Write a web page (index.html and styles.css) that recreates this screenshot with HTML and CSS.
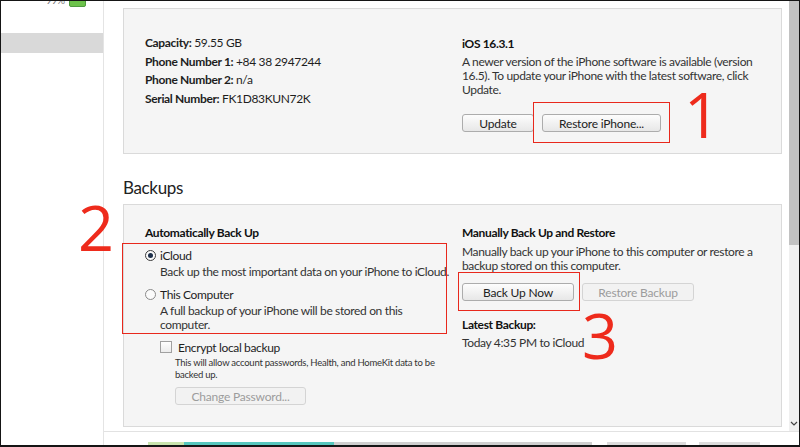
FILE: index.html
```html
<!DOCTYPE html>
<html lang="en">
<head>
    <meta charset="UTF-8">
    <title>iPhone - Summary</title>
    <link rel="stylesheet" href="styles.css">
</head>
<body>
    <aside class="sidebar">
        <div class="status"><span class="pct">99%</span><span class="battery"></span></div>
        <div class="nav-item selected"></div>
    </aside>

    <div class="main">
        <div class="main-row">
            <div class="content">
                <section class="panel summary">
                    <div class="col">
                        <p class="info"><b>Capacity:</b> 59.55 GB</p>
                        <p class="info"><b>Phone Number 1:</b> +84 38 2947244</p>
                        <p class="info"><b>Phone Number 2:</b> n/a</p>
                        <p class="info"><b>Serial Number:</b> FK1D83KUN72K</p>
                    </div>
                    <div class="col">
                        <h3>iOS 16.3.1</h3>
                        <p class="desc">A newer version of the iPhone software is available (version 16.5). To update your iPhone with the latest software, click Update.</p>
                        <div class="buttons top-buttons">
                            <button class="btn btn-update">Update</button>
                            <button class="btn btn-restore">Restore iPhone...</button>
                        </div>
                    </div>
                    <div class="mark-box box-1"></div>
                    <div class="mark-num num-1">1</div>
                </section>

                <h2>Backups</h2>

                <section class="panel backups">
                    <div class="col">
                        <h3>Automatically Back Up</h3>
                        <div class="option first">
                            <span class="radio checked"></span>
                            <span class="option-label">iCloud</span>
                        </div>
                        <p class="desc indent">Back up the most important data on your iPhone to iCloud.</p>
                        <div class="option">
                            <span class="radio"></span>
                            <span class="option-label">This Computer</span>
                        </div>
                        <p class="desc indent">A full backup of your iPhone will be stored on this<br>computer.</p>
                        <div class="option encrypt">
                            <span class="checkbox"></span>
                            <span class="option-label">Encrypt local backup</span>
                        </div>
                        <p class="small">This will allow account passwords, Health, and HomeKit data to be<br>backed up.</p>
                        <button class="btn btn-disabled btn-password">Change Password...</button>
                    </div>
                    <div class="col">
                        <h3>Manually Back Up and Restore</h3>
                        <p class="desc manual-desc">Manually back up your iPhone to this computer or restore a<br>backup stored on this computer.</p>
                        <div class="buttons backup-buttons">
                            <button class="btn btn-wide">Back Up Now</button>
                            <button class="btn btn-wide btn-disabled">Restore Backup</button>
                        </div>
                        <h3 class="latest">Latest Backup:</h3>
                        <p class="desc latest-value">Today 4:35 PM to iCloud</p>
                    </div>
                    <div class="mark-box box-2"></div>
                    <div class="mark-num num-2">2</div>
                    <div class="mark-box box-3"></div>
                    <div class="mark-num num-3">3</div>
                </section>
            </div>

            <div class="scrollbar">
                <div class="thumb"></div>
                <svg class="arrow" width="8" height="5" viewBox="0 0 8 5">
                    <path d="M1 1 L4 4 L7 1" fill="none" stroke="#444" stroke-width="1.2"/>
                </svg>
            </div>
        </div>

        <div class="bottom-strip">
            <div class="storage">
                <span class="seg seg-apps"></span>
                <span class="seg seg-docs"></span>
                <span class="seg seg-other"></span>
                <span class="seg seg-btn1"></span>
                <span class="seg seg-btn2"></span>
            </div>
        </div>
    </div>
</body>
</html>
```

FILE: styles.css
```css
body {
    margin: 0;
    width: 800px;
    height: 447px;
    box-sizing: border-box;
    overflow: hidden;
    border: 1px solid #151515;
    border-bottom-width: 2px;
    display: flex;
    background: #fff;
    font-family: 'Lato', 'Noto Sans', sans-serif;
    font-size: 12px;
    letter-spacing: -0.35px;
    color: #1e1e1e;
}

/* sidebar */
.sidebar {
    width: 102px;
    flex-shrink: 0;
    border-right: 1px solid #e4e4e4;
}

.status {
    height: 32px;
    display: flex;
    align-items: flex-start;
    gap: 4px;
    padding-left: 45px;
}

.pct {
    font-size: 10px;
    line-height: 10px;
    margin-top: -6px;
    color: #777;
}

.battery {
    width: 15px;
    height: 7px;
    margin-top: -3px;
    border: 1px solid #4f9a3e;
    border-radius: 2px;
    background: #6cc24a;
}

.nav-item {
    height: 20px;
}

.nav-item.selected {
    background: #d9d9d9;
}

/* main area */
.main {
    flex: 1;
    display: flex;
    flex-direction: column;
}

.main-row {
    height: 430px;
    display: flex;
}

.content {
    flex: 1;
    padding: 7px 7px 0 19px;
}

.panel {
    position: relative;
    background: #f5f5f5;
    border: 1px solid #dadada;
    display: grid;
    grid-template-columns: 317px 1fr;
    padding-left: 21px;
    padding-right: 20px;
    box-sizing: border-box;
}

.summary {
    padding-top: 25px;
    height: 146px;
}

.backups {
    padding-top: 19px;
    height: 223px;
}

p {
    margin: 0;
}

.info {
    line-height: 18.5px;
}

h3 {
    margin: 0;
    font-size: 12px;
    font-weight: 700;
    line-height: 18px;
    color: #111;
}

.summary h3 {
    margin-top: 1px;
}

.desc {
    line-height: 14px;
    margin-top: 2px;
    color: #333;
}

h2 {
    font-size: 17px;
    font-weight: 400;
    line-height: 22px;
    margin: 23px 0 5px;
    color: #222;
}

/* buttons */
.buttons {
    display: flex;
    gap: 8px;
}

.top-buttons {
    margin-top: 17px;
}

.btn {
    height: 18px;
    padding: 0;
    font-family: inherit;
    font-size: 12px;
    letter-spacing: -0.2px;
    color: #222;
    border: 1px solid #acacac;
    border-radius: 3px;
    background: linear-gradient(#fdfdfd, #e7e7e7);
    box-sizing: border-box;
}

.btn-update {
    width: 72px;
}

.btn-restore {
    width: 119px;
}

.btn-wide {
    width: 112px;
}

.btn-disabled {
    color: #9c9c9c;
    border-color: #d4d4d4;
    background: #f2f2f2;
}

/* backup options */
.option {
    display: flex;
    align-items: center;
    height: 16px;
    margin-top: 7px;
}

.option.first {
    margin-top: 5px;
}

.radio {
    width: 9px;
    height: 9px;
    border: 1px solid #8a8a8a;
    border-radius: 50%;
    background: #fbfbfb;
    margin-right: 4px;
    position: relative;
}

.radio.checked {
    border-color: #3a3a3a;
}

.radio.checked::after {
    content: '';
    position: absolute;
    left: 2px;
    top: 2px;
    width: 5px;
    height: 5px;
    border-radius: 50%;
    background: #1d2f4a;
}

.indent {
    padding-left: 15px;
}

.encrypt {
    padding-left: 15px;
}

.checkbox {
    width: 10px;
    height: 10px;
    border: 1px solid #a0a0a0;
    background: linear-gradient(#fff, #ececec);
    margin-right: 6px;
}

.small {
    font-size: 9.5px;
    letter-spacing: -0.25px;
    line-height: 12px;
    margin-top: 2px;
    padding-left: 30px;
    color: #333;
}

.btn-password {
    width: 131px;
    margin: 6px 0 0 30px;
}

.manual-desc {
    margin-top: 3px;
}

.backup-buttons {
    margin-top: 10px;
}

.latest {
    margin-top: 15px;
}

.latest-value {
    margin-top: 2px;
}

/* red annotations */
.mark-box {
    position: absolute;
    border: 1.5px solid #e8281c;
    box-sizing: border-box;
}

.box-1 {
    left: 409px;
    top: 93px;
    width: 137px;
    height: 41px;
}

.box-2 {
    left: -2px;
    top: 38px;
    width: 325px;
    height: 91px;
}

.box-3 {
    left: 334px;
    top: 67px;
    width: 122px;
    height: 39px;
}

.mark-num {
    position: absolute;
    font-family: 'Open Sans', sans-serif;
    font-size: 63px;
    line-height: 46px;
    letter-spacing: 0;
    color: #ee2b1c;
}

.num-1 {
    left: 560px;
    top: 82px;
}

.num-2 {
    left: -46px;
    top: -1px;
}

.num-3 {
    left: 458px;
    top: 107px;
}

/* scrollbar */
.scrollbar {
    width: 10px;
    background: #f0f0f0;
    position: relative;
}

.thumb {
    height: 244px;
    background: #c2c2c2;
}

.arrow {
    position: absolute;
    left: 1px;
    bottom: 5px;
}

/* bottom strip */
.bottom-strip {
    flex: 1;
    border-top: 1px solid #e2e2e2;
    display: flex;
    align-items: flex-end;
}

.storage {
    display: flex;
    height: 3px;
    width: 100%;
}

.seg {
    display: block;
    height: 3px;
}

.seg-apps {
    margin-left: 44px;
    width: 36px;
    background: #c9e4ae;
}

.seg-docs {
    width: 150px;
    background: #56c7be;
}

.seg-other {
    width: 258px;
    background: #cfcfcf;
}

.seg-btn1 {
    margin-left: 15px;
    width: 79px;
    background: #dcdcdc;
}

.seg-btn2 {
    margin-left: 13px;
    width: 61px;
    background: #dcdcdc;
}
```
